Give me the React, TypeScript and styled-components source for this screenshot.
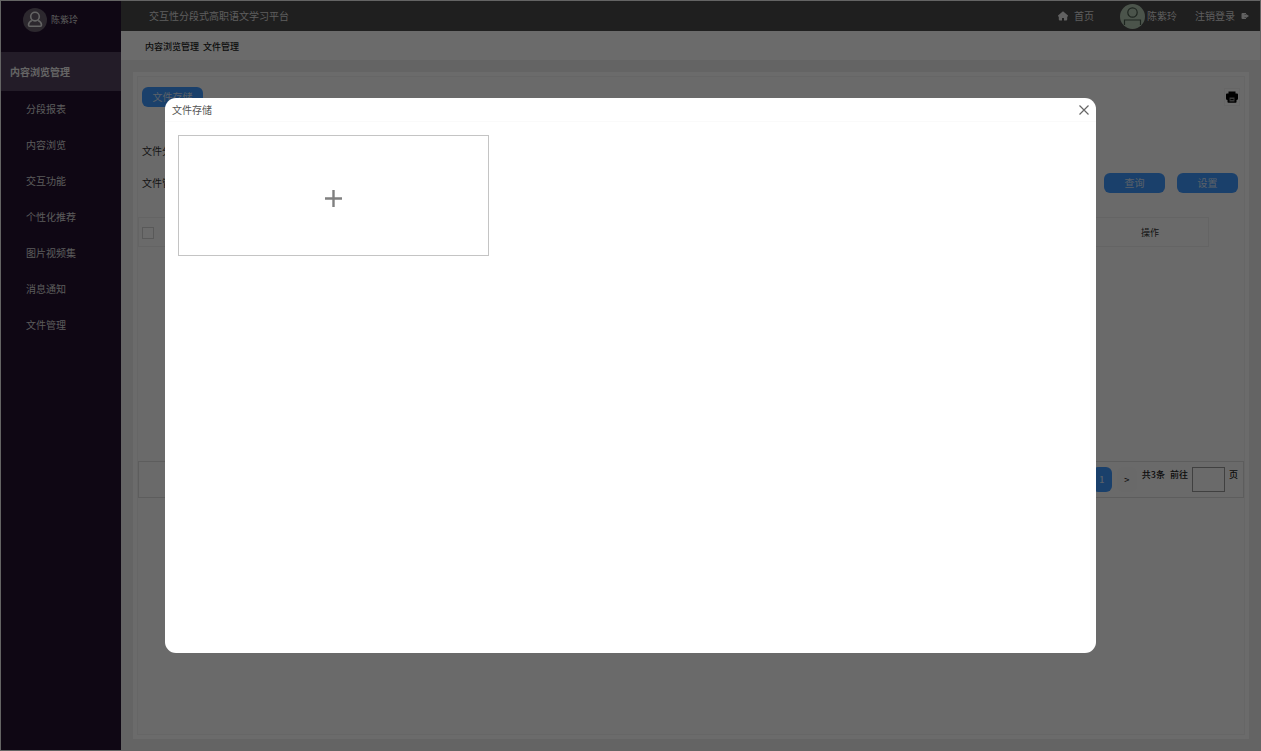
import React from "react";
import styled, { createGlobalStyle } from "styled-components";

const GlobalStyle = createGlobalStyle`
  * { box-sizing: border-box; }
  body {
    margin: 0;
    font-family: "Noto Sans CJK SC", "Noto Sans", sans-serif;
    font-size: 10px;
    line-height: 16px;
    color: #333;
  }
  button, input { font: inherit; color: inherit; padding: 0; margin: 0; }
  button { cursor: pointer; }
  a { color: inherit; text-decoration: none; }
  h1, h2, p { margin: 0; font-size: inherit; font-weight: inherit; }
`;

const Page = styled.div`
  display: flex;
  min-height: 100vh;
  border: 1px solid #eee;
  background: #eee;
`;

const Sidebar = styled.aside`
  flex: 0 0 120px;
  background: #241130;
  color: #f0f0f0;
`;

const Profile = styled.div`
  display: flex;
  align-items: center;
  gap: 4px;
  height: 51px;
  padding: 0 0 13px 22px;
  font-size: 9px;
  color: #d8d8d8;
`;

const Avatar = styled.svg<{ $size: number }>`
  flex: none;
  width: ${(p) => p.$size}px;
  height: ${(p) => p.$size}px;
`;

const SideGroup = styled.a`
  display: flex;
  align-items: center;
  height: 39px;
  padding-left: 9px;
  background: #53435f;
  font-weight: 700;
`;

const SideLink = styled.a`
  display: flex;
  align-items: center;
  height: 36px;
  padding-left: 25px;
  color: #d8d8d8;
`;

const Main = styled.div`
  flex: 1;
  min-width: 0;
  display: flex;
  flex-direction: column;
`;

const TopBar = styled.header`
  display: flex;
  align-items: center;
  height: 30px;
  padding: 0 11px 0 28px;
  background: #4a4a4a;
  color: #ddd;
`;

const Title = styled.h1`
  flex: 1;
`;

const TopLink = styled.a`
  display: flex;
  align-items: center;
  gap: 6px;
`;

const TopUser = styled.div`
  display: flex;
  align-items: center;
  gap: 2px;
  margin: 0 18px 0 26px;
`;

const Crumbs = styled.nav`
  display: flex;
  align-items: center;
  gap: 4px;
  height: 29px;
  padding: 2px 0 0 24px;
  background: #fff;
  font-size: 9px;
  font-weight: 500;
  color: #222;
`;

const Card = styled.main`
  flex: 1;
  display: flex;
  margin: 12px 11px 11px 12px;
  padding: 4px;
  background: #fff;
`;

const Panel = styled.div`
  flex: 1;
  min-width: 0;
  border: 1px solid #f4f4f4;
  background: #fdfdfd;
`;

const Tools = styled.div`
  display: flex;
  align-items: center;
  justify-content: space-between;
  padding: 10px 4px 0;
`;

const BlueButton = styled.button`
  width: 61px;
  height: 20px;
  border: 0;
  border-radius: 6px;
  background: #3e98ff;
  color: #d8e6f8;
  line-height: 20px;
`;

const PrintButton = styled.button`
  display: grid;
  place-items: center;
  width: 16px;
  height: 18px;
  border: 1px solid #f4f4f4;
  background: #fff;
`;

const Filters = styled.div`
  display: flex;
  align-items: flex-end;
  justify-content: space-between;
  padding: 34px 6px 0 4px;
`;

const Labels = styled.div`
  display: grid;
  gap: 12px;
  line-height: 20px;
`;

const Actions = styled.div`
  display: flex;
  gap: 12px;
`;

const Table = styled.table`
  width: calc(100% - 35px);
  height: 30px;
  margin-top: 24px;
  border-collapse: collapse;
  table-layout: fixed;
  outline: 1px solid #eee;
  outline-offset: -1px;
  th { padding: 2px 0 0; font-weight: 400; font-size: 9px; }
  th:first-child { text-align: left; padding-left: 4px; }
  th:last-child { width: 118px; }
`;

const Check = styled.input`
  display: block;
  appearance: none;
  width: 12px;
  height: 12px;
  border: 1px solid #d4d4d4;
  background: #fff;
`;

const Pager = styled.nav`
  display: flex;
  justify-content: flex-end;
  gap: 5px;
  height: 37px;
  margin-top: 214px;
  padding: 5px;
  border: 1px solid #ddd;
  font-size: 9px;
  font-weight: 500;
  color: #222;
`;

const PageButton = styled.button<{ $active?: boolean }>`
  width: 20px;
  height: 25px;
  border: 0;
  border-radius: 6px;
  background: ${(p) => (p.$active ? "#3e98ff" : "#f9f9f9")};
  color: ${(p) => (p.$active ? "#d8e6f8" : "#222")};
`;

const Goto = styled.label`
  display: flex;
  gap: 4px;
`;

const PageInput = styled.input`
  width: 33px;
  height: 25px;
  border: 1px solid #999;
  background: transparent;
`;

const Backdrop = styled.div`
  position: fixed;
  inset: 0;
  padding: 98px 165px;
  background: rgba(0, 0, 0, 0.58);
`;

const Dialog = styled.section`
  height: 100%;
  border-radius: 11px;
  background: #fff;
  color: #555;
`;

const DialogHead = styled.header`
  display: flex;
  align-items: center;
  justify-content: space-between;
  height: 24px;
  padding: 0 7px;
  border-bottom: 1px solid #fafafa;
`;

const CloseButton = styled.button`
  display: grid;
  place-items: center;
  width: 10px;
  height: 10px;
  border: 0;
  background: none;
`;

const UploadBox = styled.button`
  display: grid;
  place-items: center;
  width: 311px;
  height: 121px;
  margin: 13px;
  padding-top: 6px;
  border: 1px solid #c4c4c4;
  background: #fff;
`;

const links = ["分段报表", "内容浏览", "交互功能", "个性化推荐", "图片视频集", "消息通知", "文件管理"];

export default function App() {
  return (
    <>
      <GlobalStyle />
      <Page>
        <Sidebar>
          <Profile>
            <Avatar $size={24} viewBox="0 0 24 24" fill="none" aria-hidden="true">
              <circle cx="12" cy="12" r="12" fill="#695f6e" />
              <circle cx="12" cy="8.6" r="4.3" stroke="#eee" strokeWidth="1.6" />
              <path d="M8.8 12.400Q5.600 13.800 5.500 17q0 1.200 1.200 1.200h10.600q1.200 0 1.200-1.200Q18.400 13.800 15.200 12.400" stroke="#eee" strokeWidth="1.6" />
            </Avatar>
            陈紫玲
          </Profile>
          <nav>
            <SideGroup href="#content">内容浏览管理</SideGroup>
            {links.map((t) => (
              <SideLink href="#content" key={t}>{t}</SideLink>
            ))}
          </nav>
        </Sidebar>
        <Main>
          <TopBar>
            <Title>交互性分段式高职语文学习平台</Title>
            <TopLink href="#home">
              <svg width="10" height="10" viewBox="0 0 10 10" fill="#e6e6e6" aria-hidden="true">
                <path d="M5 .3 0 4.500V5.500h.8v3q0 1 1 1H4V7h2v2.500h2.200q1 0 1-1v-3H10v-1Z" />
              </svg>
              首页
            </TopLink>
            <TopUser>
              <Avatar $size={25} viewBox="0 0 25 25" fill="none" aria-hidden="true">
                <circle cx="12.5" cy="12.5" r="12.5" fill="#b4c8b4" />
                <circle cx="12.5" cy="8.5" r="4.7" stroke="#46584a" strokeWidth="1.2" />
                <path d="M4.500 21v-5h16v5" stroke="#46584a" strokeWidth="1.2" />
              </Avatar>
              陈紫玲
            </TopUser>
            <TopLink href="#logout">
              注销登录
              <svg width="8" height="8" viewBox="0 0 8 8" aria-hidden="true">
                <path d="M1.500 1H5v1.500H3.500v3H5V7H1.500Q.5 7 .5 6V2Q.5 1 1.500 1ZM5 2l3 2-3 2V5H3.500V3H5Z" fill="#e6e6e6" />
              </svg>
            </TopLink>
          </TopBar>
          <Crumbs>
            <span>内容浏览管理</span>
            <span>文件管理</span>
          </Crumbs>
          <Card id="content">
            <Panel>
              <Tools>
                <BlueButton type="button">文件存储</BlueButton>
                <PrintButton type="button" aria-label="打印">
                  <svg width="12" height="12" viewBox="0 0 12 12" aria-hidden="true">
                    <path d="M2.500.5h7v2H11q1 0 1 1v4q0 1.500-1.500 1.500V11q0 .8-.8.8H2.300q-.8 0-.8-.8V9Q0 9 0 7.500v-4q0-1 1-1h1.500Z" fill="#000" />
                    <path d="M3.500 6.500h5v4h-5Z" fill="#888" />
                    <path d="M4.500 8.500h3" stroke="#000" />
                  </svg>
                </PrintButton>
              </Tools>
              <Filters>
                <Labels>
                  <span>文件分类</span>
                  <span>文件管理</span>
                </Labels>
                <Actions>
                  <BlueButton type="button">查询</BlueButton>
                  <BlueButton type="button">设置</BlueButton>
                </Actions>
              </Filters>
              <Table>
                <thead>
                  <tr>
                    <th scope="col"><Check type="checkbox" aria-label="全选" /></th>
                    <th scope="col">操作</th>
                  </tr>
                </thead>
              </Table>
              <Pager aria-label="分页">
                <PageButton type="button" $active>1</PageButton>
                <PageButton type="button">&gt;</PageButton>
                <span>共3条</span>
                <Goto>
                  前往
                  <PageInput type="text" aria-label="页码" />
                  页
                </Goto>
              </Pager>
            </Panel>
          </Card>
        </Main>
      </Page>
      <Backdrop>
        <Dialog role="dialog" aria-modal="true" aria-labelledby="dialog-title">
          <DialogHead>
            <h2 id="dialog-title">文件存储</h2>
            <CloseButton type="button" aria-label="关闭">
              <svg width="10" height="10" viewBox="0 0 10 10" stroke="#666" strokeWidth="1.2" aria-hidden="true">
                <path d="m.5.5 9 9m0-9-9 9" />
              </svg>
            </CloseButton>
          </DialogHead>
          <UploadBox type="button" aria-label="添加文件">
            <svg width="17" height="17" viewBox="0 0 17 17" stroke="#808080" strokeWidth="2.4" aria-hidden="true">
              <path d="M8.500 0v17M0 8.500h17" />
            </svg>
          </UploadBox>
        </Dialog>
      </Backdrop>
    </>
  );
}
